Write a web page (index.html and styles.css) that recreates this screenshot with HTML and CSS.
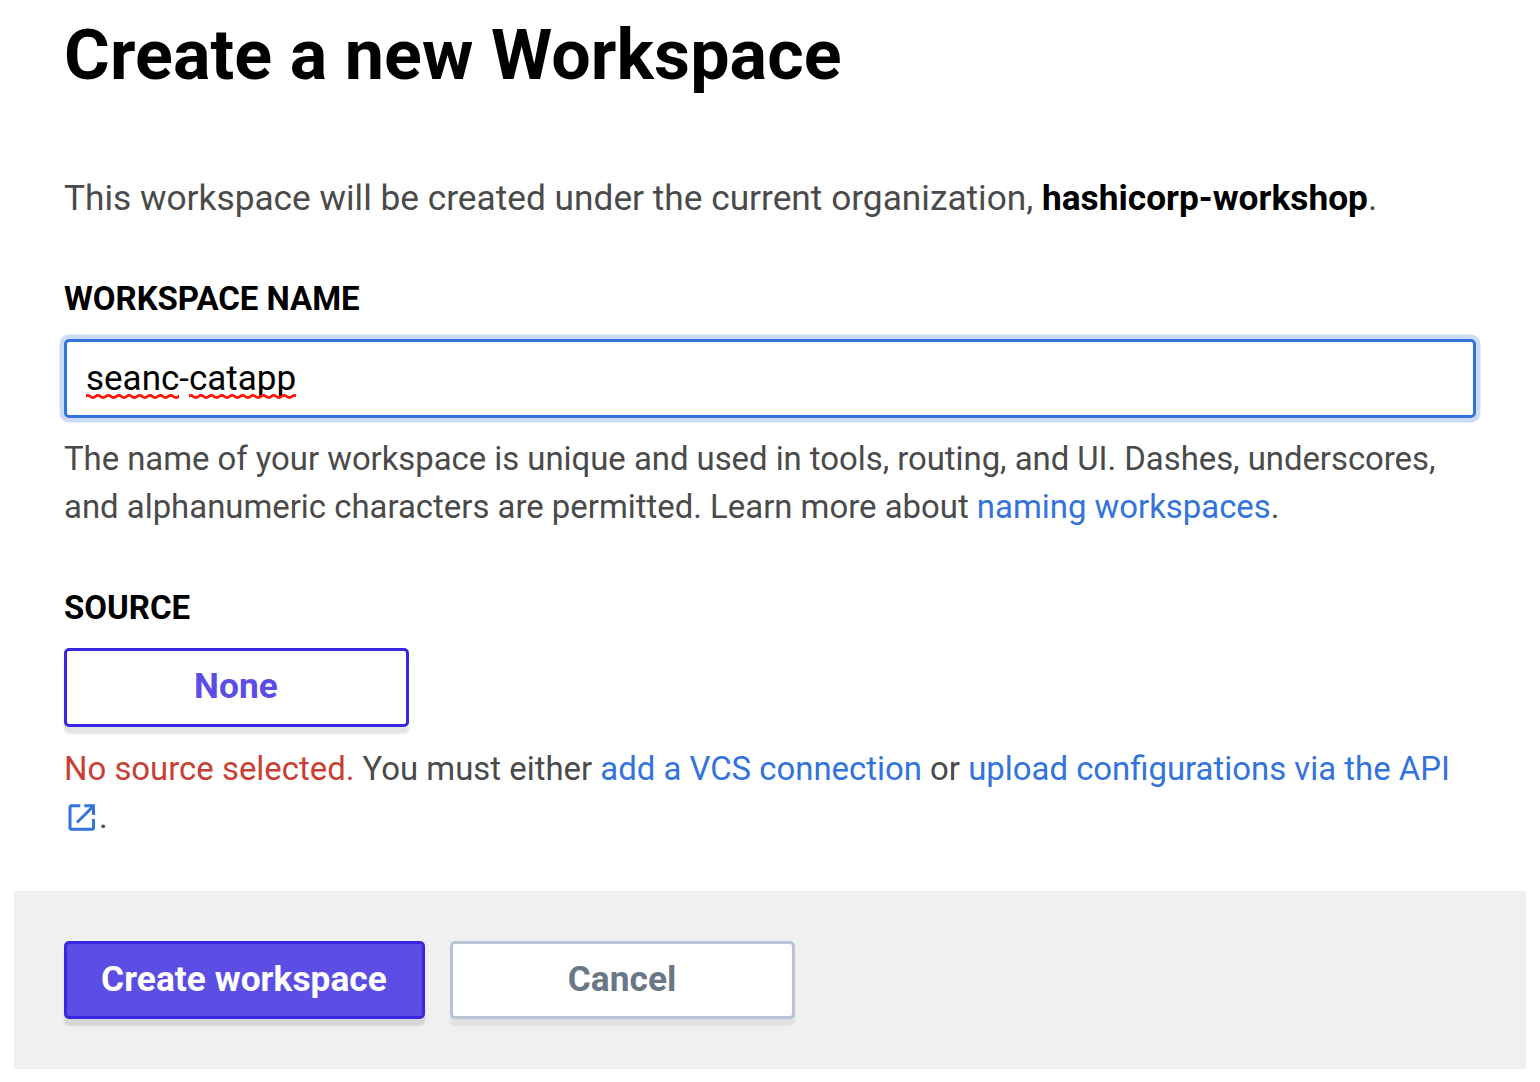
FILE: index.html
```html
<!DOCTYPE html>
<html lang="en">
<head>
<meta charset="utf-8">
<title>Create a new Workspace</title>
<link rel="stylesheet" href="styles.css">
</head>
<body>
<form class="page">
  <main class="content">
    <h1 class="title">Create a new Workspace</h1>
    <p class="intro">This workspace will be created under the current organization, <strong>hashicorp-workshop</strong>.</p>
    <div class="label name-label">WORKSPACE NAME</div>
    <div class="input"><span class="value"><span class="word">seanc<svg class="squiggle" width="93" height="7"><use href="#wave"/></svg></span>-<span class="word">catapp<svg class="squiggle" width="107" height="7"><use href="#wave"/></svg></span></span></div>
    <p class="help name-help"><span class="tight">The name of your workspace is unique and used in tools, routing, and UI. Dashes, underscores,</span><br>and alphanumeric characters are permitted. Learn more about <a>naming workspaces</a>.</p>
    <div class="label source-label">SOURCE</div>
    <button type="button" class="btn outline">None</button>
    <p class="help source-help"><span class="error">No source selected.</span> You must either <a>add a VCS connection</a> or <a>upload configurations via the API<br><svg class="external" viewBox="0 0 28 28" width="28" height="28"><path d="M12.3 1.8H3.5Q2 1.8 2 3.3V23.7Q2 25.2 3.5 25.2H24Q25.5 25.2 25.5 23.7V15M16.3 1.8H25.5V11M25 2.5L9 18.5" fill="none" stroke="currentColor" stroke-width="3"/></svg></a>.</p>
  </main>
  <footer class="actions">
    <button type="button" class="btn primary">Create workspace</button>
    <button type="button" class="btn cancel">Cancel</button>
  </footer>
</form>
<svg class="defs" width="0" height="0"><defs><path id="wave" d="M-3.6 4.7c2.6 0 2.6-2.3 5.2-2.3s2.6 2.3 5.2 2.3s2.6-2.3 5.2-2.3s2.6 2.3 5.2 2.3s2.6-2.3 5.2-2.3s2.6 2.3 5.2 2.3s2.6-2.3 5.2-2.3s2.6 2.3 5.2 2.3s2.6-2.3 5.2-2.3s2.6 2.3 5.2 2.3s2.6-2.3 5.2-2.3s2.6 2.3 5.2 2.3s2.6-2.3 5.2-2.3s2.6 2.3 5.2 2.3s2.6-2.3 5.2-2.3s2.6 2.3 5.2 2.3s2.6-2.3 5.2-2.3s2.6 2.3 5.2 2.3s2.6-2.3 5.2-2.3s2.6 2.3 5.2 2.3s2.6-2.3 5.2-2.3s2.6 2.3 5.2 2.3" fill="none" stroke="#ff1408" stroke-width="2.7"/></defs></svg>
</body>
</html>
```
FILE: styles.css
```css
* { box-sizing: border-box; }
body { margin: 0; background: #fff; color: #000; font-family: Roboto, sans-serif; }
.page { width: 1512px; margin: 0 14px; }
.content { height: 891px; padding: 13px 50px 0; }
.title { margin: 0; font-size: 70px; line-height: 84px; font-weight: 700; letter-spacing: .1px; white-space: nowrap; }
.intro { margin: 77px 0 0; font-size: 35.28px; line-height: 48px; color: #4a4a4a; white-space: nowrap; }
.intro strong { color: #000; font-weight: 700; }
.label { font-size: 33px; line-height: 40px; font-weight: 700; }
.name-label { margin-top: 57px; letter-spacing: -.04px; }
.input { display: flex; align-items: center; width: 1412px; height: 79px; margin-top: 20px; padding: 0 19px; border: 3px solid #3273dc; border-radius: 5px; box-shadow: 0 0 0 4.5px #cddcf6; font-size: 35px; }
.word { position: relative; }
.squiggle { position: absolute; left: 0; bottom: -1px; }
.help { margin: 0; font-size: 32.9px; line-height: 48px; color: #4a4a4a; white-space: nowrap; }
.help a { color: #3273dc; }
.name-help { margin-top: 17px; }
.tight { letter-spacing: -.03px; }
.source-label { margin-top: 57px; }
.error { color: #c84034; }
.btn { display: block; height: 79px; width: 345px; padding: 0 1px 3px 0; border: 3px solid; border-radius: 5px; font: 700 35.28px/42px Roboto, sans-serif; letter-spacing: .04px; box-shadow: 0 7px 2px rgba(0,0,0,.1); }
.outline { margin-top: 20px; color: #5c4ee5; border-color: #3828e0; background: #fff; }
.source-help { margin-top: 18px; }
.external { margin: 0 3px 0 4px; vertical-align: -4px; }
.actions { display: flex; gap: 25px; height: 178px; padding: 50px; background: #f0f0f0; }
.actions .btn { height: 78px; padding-bottom: 2px; }
.primary { width: 361px; color: #fff; background: #5c4ee5; border-color: #3828e0; }
.actions .cancel { color: #6a7786; background: #fff; border-color: #b8c4d6; box-shadow: 0 7px 2px rgba(0,0,0,.06); }
.defs { position: absolute; }
```
